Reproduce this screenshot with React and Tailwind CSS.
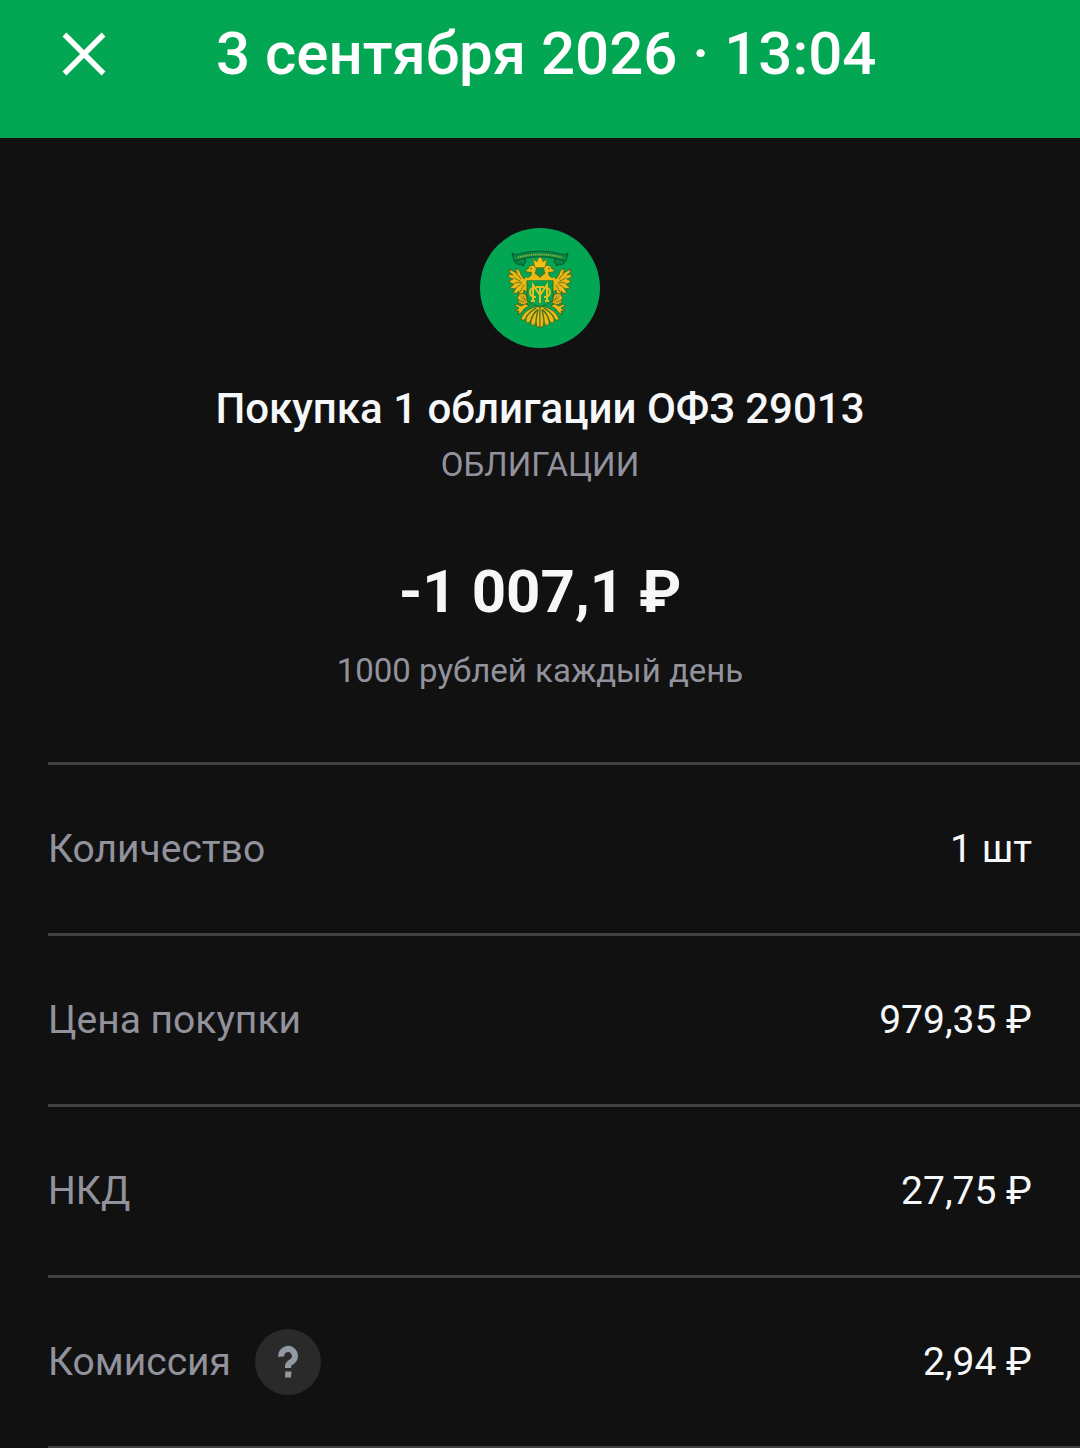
const details = [
  { label: 'Количество', value: '1 шт' },
  { label: 'Цена покупки', value: '979,35 ₽' },
  { label: 'НКД', value: '27,75 ₽' },
  { label: 'Комиссия', value: '2,94 ₽', hint: true },
];

function CloseIcon() {
  return (
    <svg className="w-[72px] h-[72px]" viewBox="0 0 72 72" fill="none" stroke="currentColor" strokeWidth="5.4">
      <path d="M16.5 16.5 55.5 55.5M55.5 16.5 16.5 55.5" />
    </svg>
  );
}

function QuestionIcon() {
  return (
    <svg className="w-[66px] h-[66px]" viewBox="0 0 66 66" fill="none" stroke="currentColor" strokeWidth="6.2">
      <path d="M26.2 27.6a6.9 6.9 0 1 1 10.4 5.2c-2.4 1.4-3.5 2.2-3.5 4v2.2" />
      <path d="M30.3 42.600h6.200l-.5 5.800h-6z" fill="currentColor" stroke="none" />
    </svg>
  );
}

// One half of the eagle, mirrored around x=60 for the other side
function EagleHalf() {
  return (
    <g strokeLinejoin="round" strokeLinecap="round">
      {/* wing */}
      <path
        d="M49 51c-4 1-7-1-8-5-1-3-2-5-6-5l2 4-8-4c0 3 2 5 4 6l-5-1c0 3 3 5 5 5l-4 2c1 2 3 3 5 3l-4 4c2 1 5 1 6 0l-3 5c2 1 5 0 6-2l0 6c3-1 5-4 5-7l4 3 3-7z"
        fill="#e7ba17"
        stroke="#4c641a"
        strokeWidth=".9"
      />
      <path
        d="M36 45l5 6M34 50l6 3M35 55l6-1M36 60l6-5M40 64l4-7"
        stroke="#77741a"
        strokeWidth="1"
        fill="none"
      />
      {/* head and neck */}
      <path
        d="M46 51c4-2 6-4 5-7-2 1-5 0-6-2l3-1c1-4 5-5 8-2 1 3 0 5-1 6l5 4v3z"
        fill="#e7ba17"
        stroke="#4c641a"
        strokeWidth=".9"
      />
      <circle cx="51" cy="40.6" r=".8" fill="#4c641a" />
      {/* leg */}
      <path
        d="M40 66c4-2 7 1 7 5l1 4-4 2-6-2 1-3-2-2z"
        fill="#dcb119"
        stroke="#4c641a"
        strokeWidth=".9"
      />
      <path d="M41 69l3 3M43 68l3 5M40 73l4 1" stroke="#77741a" strokeWidth=".9" fill="none" />
      {/* claw */}
      <path
        d="M45 76l-4 2-5-2-1 2 4 2-4 3 4 0-1 4 4-3 2-3 5-3z"
        fill="#e7ba17"
        stroke="#4c641a"
        strokeWidth=".9"
      />
      {/* tail feathers */}
      <path
        d="M55 79c-7 2-12 6-14 12 1 2 4 1 5-1l0 4c2 2 4 0 5-2l0 5c2 1 4 0 5-3l1 5h3V79z"
        fill="#e7ba17"
        stroke="#4c641a"
        strokeWidth=".9"
      />
      <path
        d="M56 80c-4 3-8 5-10 10M57 82c-3 3-5 6-6 10M58 82c-1 4-2 8-2 12"
        stroke="#3c6c20"
        strokeWidth="1.2"
        fill="none"
      />
    </g>
  );
}

function Emblem() {
  return (
    <svg className="w-[120px] h-[120px] rounded-full bg-[#03a653]" viewBox="0 0 120 120" aria-hidden="true">
      <EagleHalf />
      <g transform="matrix(-1 0 0 1 120 0)">
        <EagleHalf />
      </g>
      {/* ribbon over the crown */}
      <g fill="#078a45" stroke="#075c32" strokeWidth="1.1" strokeLinejoin="round">
        <path d="M35 32c0 4 3 5 6 4l2 2 3-5-3-3zM85 32c0 4-3 5-6 4l-2 2-3-5 3-3z" />
        <path d="M32 25c2 2 4 2 7 1 14-4 28-4 42 0 3 1 5 1 7-1l-2 8c-3 0-5-1-8-2-12-3-24-3-36 0-3 1-5 2-8 2z" />
      </g>
      <path d="M38 29.5c14-4 30-4 44 0" fill="none" stroke="#8fb03a" strokeWidth="1.8" strokeDasharray="1.2 .7" />
      {/* crown */}
      <path
        d="M53 31l4 3 1-3 2-2 2 2 1 3 4-3-2 8.5H55z"
        fill="#f2c114"
        stroke="#80751a"
        strokeWidth=".7"
      />
      <path d="M56 41h8v3c0 2-2 3-4 4-2-1-4-2-4-4z" fill="#08984b" stroke="#52741b" strokeWidth=".8" />
      {/* shield */}
      <path d="M47 52h26v18c0 5-7 6-13 9-6-3-13-4-13-9z" fill="#05a450" stroke="#34651c" strokeWidth=".9" />
      <path d="M45 51h30" stroke="#e7ba17" strokeWidth="2.6" />
      {/* monogram */}
      <g fill="none" stroke="#e3bf1e" strokeWidth="2">
        <path d="M53 73V57l7 10 7-10v16" />
        <path d="M60 59v16M56 59h8M51 73h4M65 73h4" />
        <path d="M56 60c-8-2-8 10 0 9M64 60c8-2 8 10 0 9" />
      </g>
    </svg>
  );
}

export default function App() {
  return (
    <div className="min-h-screen bg-[#111111] font-['Roboto',sans-serif] text-[#f6f7f8]">
      <header className="flex items-start gap-24 bg-[#03a653] px-12 pt-[18px] pb-12 text-white">
        <button type="button" aria-label="Закрыть" className="shrink-0">
          <CloseIcon />
        </button>
        <h1 className="text-[60px] leading-[72px] font-medium whitespace-nowrap">3 сентября 2026 · 13:04</h1>
      </header>

      <main>
        <section className="flex flex-col items-center pt-[90px] pb-[70px] text-center">
          <Emblem />
          <h2 className="mt-9 text-[42px] leading-[50px] font-medium">Покупка 1 облигации ОФЗ 29013</h2>
          <p className="mt-2.5 text-[33px] leading-[42px] text-[#92929d]">ОБЛИГАЦИИ</p>
          <p className="mt-[70px] text-[60px] leading-[72px] font-bold">-1 007,1 ₽</p>
          <p className="mt-[22px] text-[33px] leading-[42px] text-[#92929d]">1000 рублей каждый день</p>
        </section>

        <dl className="ml-12 border-b-[3px] border-[#414141]">
          {details.map((item) => (
            <div
              key={item.label}
              className="flex h-[171px] items-center justify-between border-t-[3px] border-[#414141] pr-12 text-[39px] leading-[48px]"
            >
              <dt className="flex items-center gap-6 text-[#92929d]">
                {item.label}
                {item.hint && (
                  <button type="button" aria-label="О комиссии" className="rounded-full bg-[#2a2a2a] text-[#9299a2]">
                    <QuestionIcon />
                  </button>
                )}
              </dt>
              <dd>{item.value}</dd>
            </div>
          ))}
        </dl>
      </main>
    </div>
  );
}
